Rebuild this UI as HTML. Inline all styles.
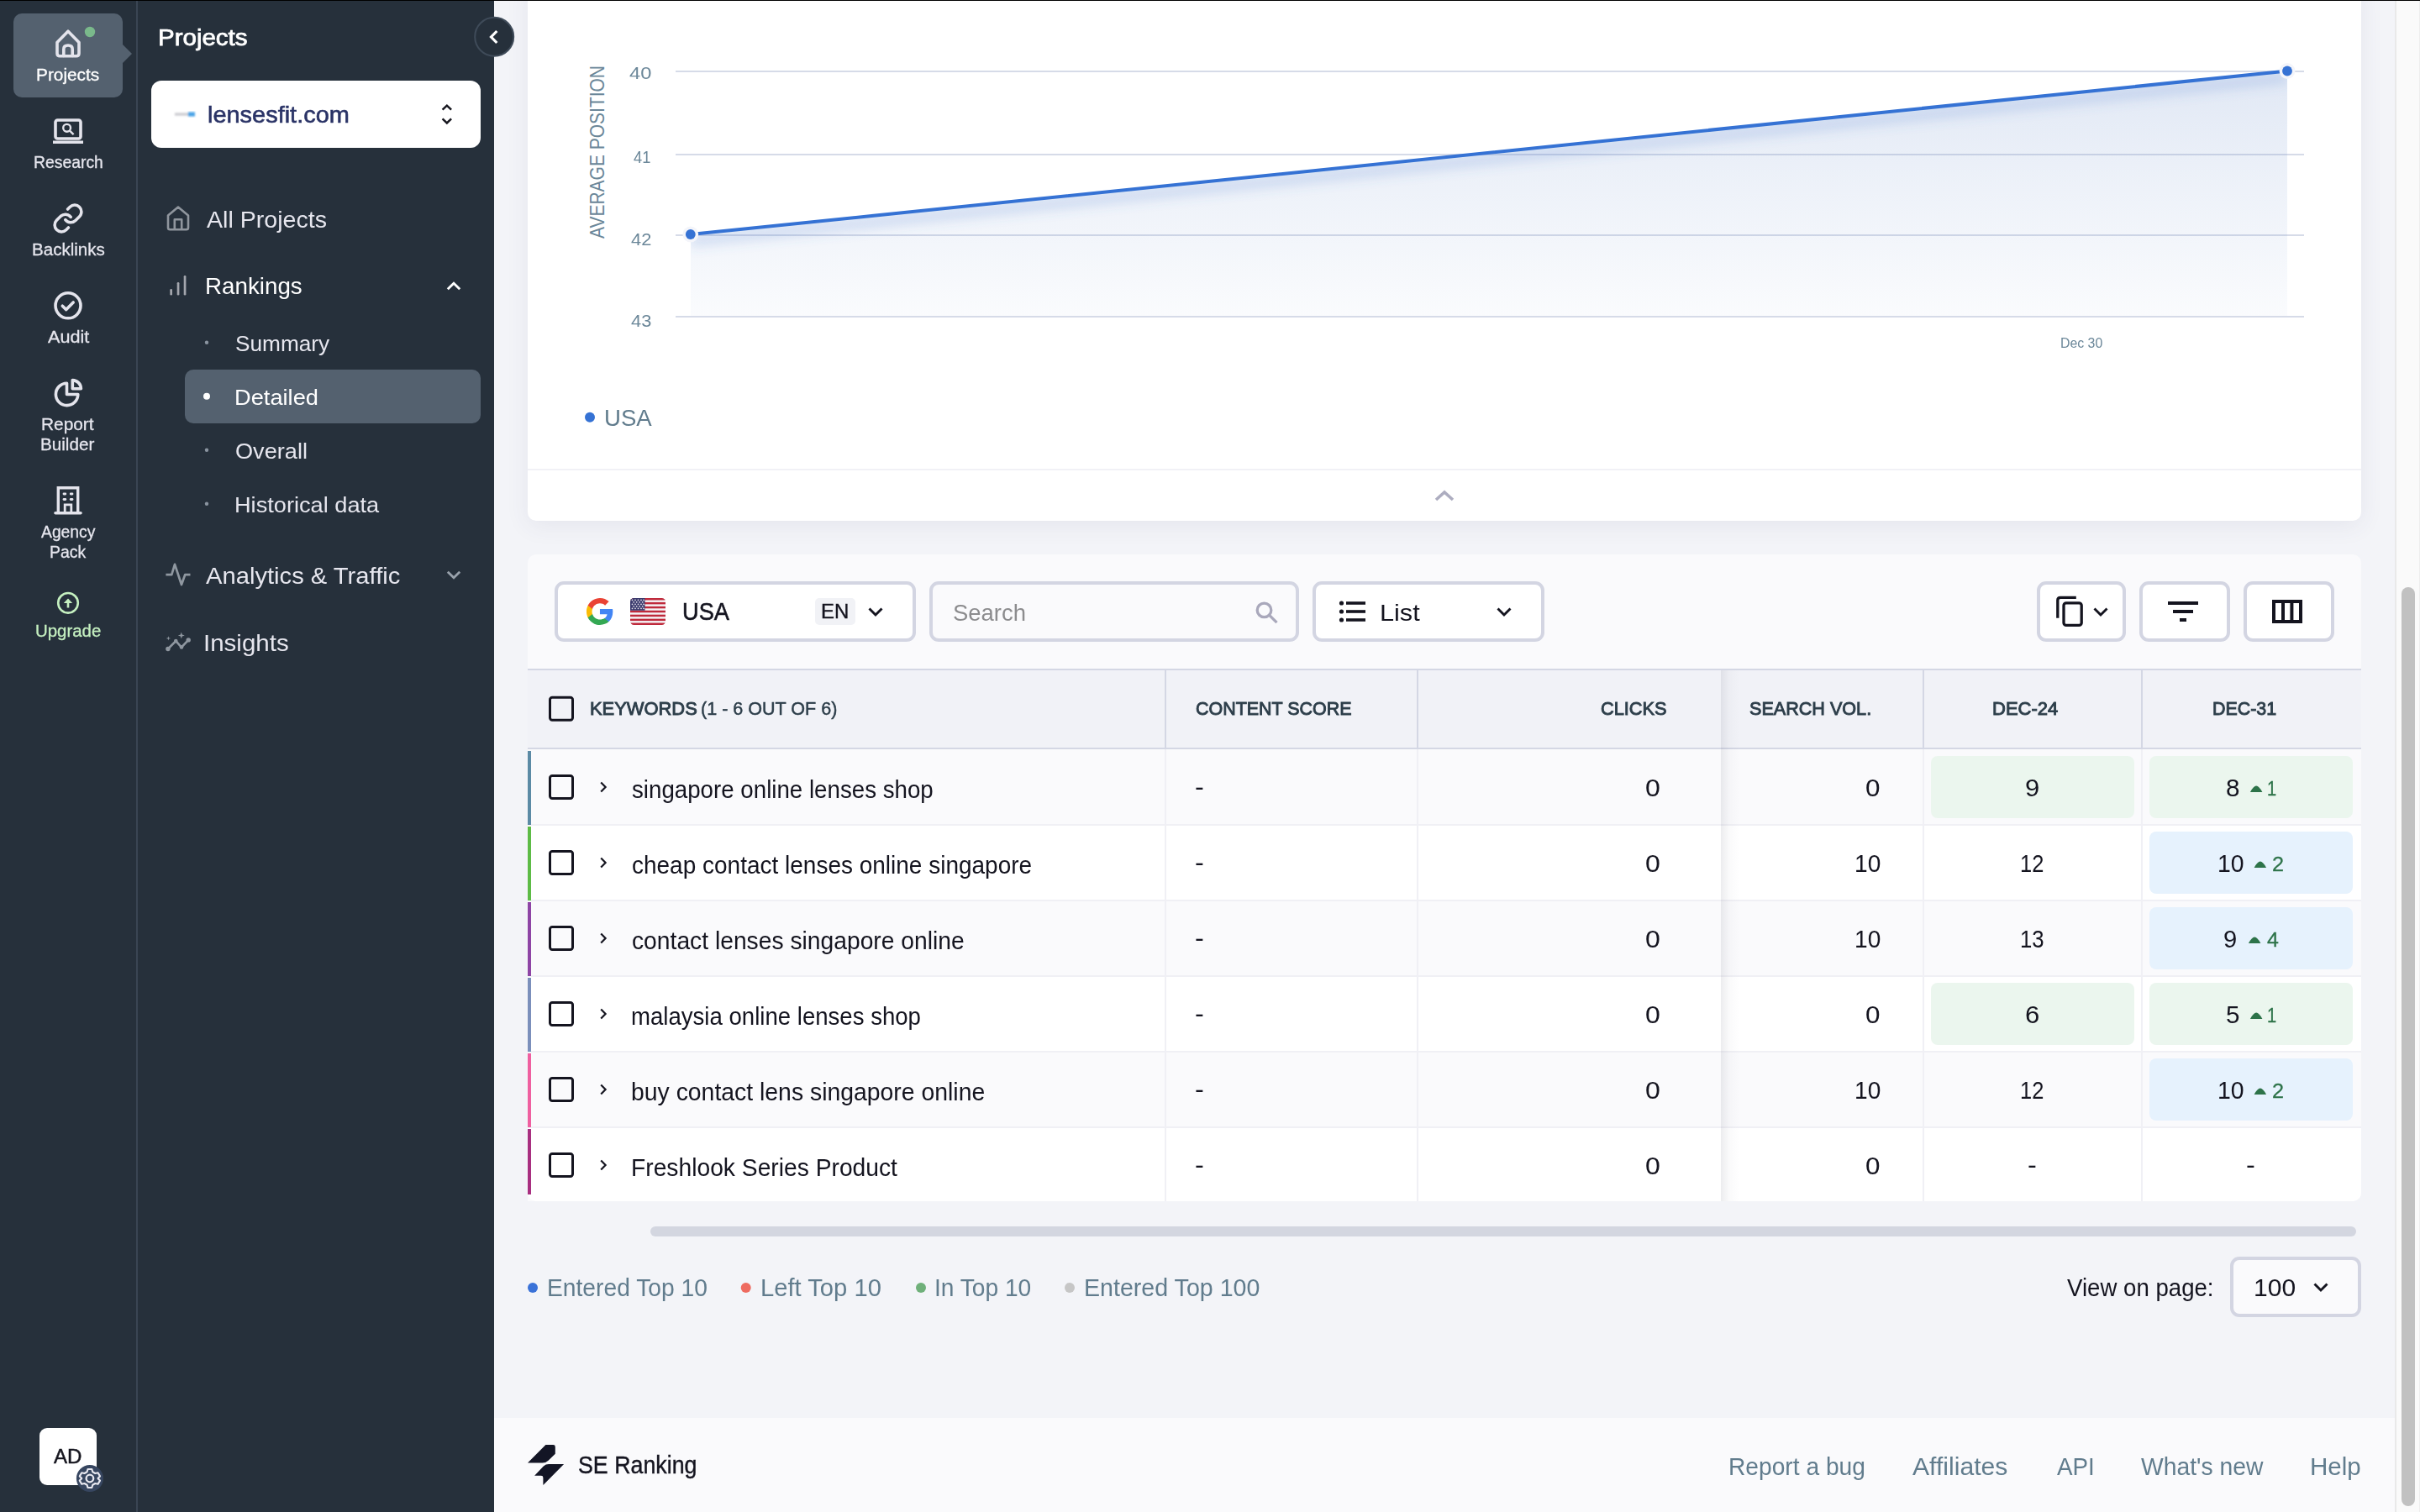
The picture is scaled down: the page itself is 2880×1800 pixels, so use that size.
<!DOCTYPE html>
<html lang="en"><head><meta charset="utf-8"><title>SE Ranking - Rankings</title>
<style>
html,body{margin:0;padding:0}
body{width:2880px;height:1800px;position:relative;overflow:hidden;background:#f3f4f8;font-family:"Liberation Sans",sans-serif}
.a{position:absolute}
.t{position:absolute;white-space:nowrap;line-height:1;transform-origin:0 0}
svg{position:absolute;overflow:visible}
.box{position:absolute;box-sizing:border-box;border:4px solid #d3d5e2;border-radius:11px;background:#fff}
</style></head><body>

<div class="a" style="left:628px;top:-20px;width:2182px;height:640px;background:#fff;border-radius:10px;box-shadow:0 6px 28px rgba(60,70,110,0.078);"></div>
<div class="a" style="left:628px;top:558px;width:2182px;height:2px;background:#f1f1f6;"></div>
<div class="a" style="left:628px;top:660px;width:2182px;height:770px;background:#fafafc;border-radius:10px 10px 10px 0;overflow:hidden;"></div>
<div class="a" style="left:588px;top:1688px;width:2263px;height:112px;background:#fafafc;"></div>
<div class="a" style="left:2850px;top:0px;width:30px;height:1800px;background:#fafafa;border-left:2px solid #e9e9e9;box-sizing:border-box;border-right:1px solid #eee"></div>
<div class="a" style="left:2858px;top:699px;width:16px;height:1094px;background:#c1c1c1;border-radius:8px;"></div>
<div class="a" style="left:804px;top:84px;width:1938px;height:2px;background:#d6dbe8;"></div>
<div class="a" style="left:804px;top:182.8px;width:1938px;height:2px;background:#d6dbe8;"></div>
<div class="a" style="left:804px;top:279.4px;width:1938px;height:2px;background:#d6dbe8;"></div>
<div class="a" style="left:804px;top:375.7px;width:1938px;height:2px;background:#d6dbe8;"></div>
<svg style="left:0;top:0" width="2880" height="640" viewBox="0 0 2880 640">
<defs><linearGradient id="ag" x1="0" y1="0" x2="0" y2="1"><stop offset="0" stop-color="#6e91cd" stop-opacity="0.21"/><stop offset="0.45" stop-color="#6e91cd" stop-opacity="0.125"/><stop offset="1" stop-color="#6e91cd" stop-opacity="0.035"/></linearGradient>
<filter id="bl" x="-5%" y="-50%" width="110%" height="200%"><feGaussianBlur stdDeviation="7"/></filter>
<clipPath id="cp"><polygon points="822,279 2722,84.5 2722,377 822,377"/></clipPath></defs>
<polygon points="822,279 2722,84.5 2722,376 822,376" fill="url(#ag)"/>
<g clip-path="url(#cp)"><line x1="822" y1="287" x2="2722" y2="92.5" stroke="#4a7ad2" stroke-opacity="0.21" stroke-width="13" filter="url(#bl)"/></g>
<line x1="822" y1="279" x2="2722" y2="84.5" stroke="#3572d4" stroke-width="4" stroke-linecap="round"/>
<circle cx="821.8" cy="279" r="9.4" fill="#f4f5fa"/><circle cx="821.8" cy="279" r="5.9" fill="#3572d4"/>
<circle cx="2722" cy="84.5" r="9.4" fill="#f4f5fa"/><circle cx="2722" cy="84.5" r="5.9" fill="#3572d4"/>
<circle cx="702" cy="496.8" r="6" fill="#3572d4"/>
<path d="M1709 595 L1719 586 L1729 595" fill="none" stroke="#adadc0" stroke-width="3.6"/>
</svg>
<div class="box" style="left:660px;top:692px;width:430px;height:72px"></div>
<div class="box" style="left:1106px;top:692px;width:440px;height:72px;background:#fafafc"></div>
<div class="box" style="left:1562px;top:692px;width:276px;height:72px"></div>
<div class="box" style="left:2424px;top:692px;width:106px;height:72px"></div>
<div class="box" style="left:2546px;top:692px;width:108px;height:72px"></div>
<div class="box" style="left:2670px;top:692px;width:108px;height:72px"></div>
<div class="a" style="left:970px;top:712px;width:48px;height:32px;background:#f1f2f6;border-radius:5px;"></div>
<div class="box" style="left:2654px;top:1496px;width:156px;height:72px;background:#fafafc"></div>
<svg style="left:0;top:0" width="2880" height="1800" viewBox="0 0 2880 1800">
<!-- google G -->
<g transform="translate(696.5,710.5) scale(0.7273)">
<path fill="#4285F4" d="M45.12 24.5c0-1.56-.14-3.06-.4-4.5H24v8.51h11.84c-.51 2.75-2.06 5.08-4.39 6.64v5.52h7.11c4.16-3.83 6.56-9.47 6.56-16.17z"/>
<path fill="#34A853" d="M24 46c5.94 0 10.92-1.97 14.56-5.33l-7.11-5.52c-1.97 1.32-4.49 2.1-7.45 2.1-5.73 0-10.58-3.87-12.31-9.07H4.34v5.7C7.96 41.07 15.4 46 24 46z"/>
<path fill="#FBBC05" d="M11.69 28.18C11.25 26.86 11 25.45 11 24s.25-2.86.69-4.18v-5.7H4.34C2.85 17.09 2 20.45 2 24c0 3.55.85 6.91 2.34 9.88l7.35-5.7z"/>
<path fill="#EA4335" d="M24 10.75c3.23 0 6.13 1.11 8.41 3.29l6.31-6.31C34.91 4.18 29.93 2 24 2 15.4 2 7.96 6.93 4.34 14.12l7.35 5.7c1.73-5.2 6.58-9.07 12.31-9.07z"/>
</g>
<!-- US flag -->
<defs><clipPath id="fc"><rect x="750" y="712" width="42" height="32" rx="4.5"/></clipPath></defs>
<g clip-path="url(#fc)">
<rect x="750" y="712" width="42" height="32" fill="#f5f5f7"/>
<g fill="#bf2a3c">
<rect x="750" y="712" width="42" height="2.46"/><rect x="750" y="716.92" width="42" height="2.46"/><rect x="750" y="721.85" width="42" height="2.46"/><rect x="750" y="726.77" width="42" height="2.46"/><rect x="750" y="731.69" width="42" height="2.46"/><rect x="750" y="736.62" width="42" height="2.46"/><rect x="750" y="741.54" width="42" height="2.46"/>
</g>
<rect x="750" y="712" width="17.5" height="14.77" fill="#3c3b6e"/>
<g fill="#fff" fill-opacity="0.85">
<circle cx="752.5" cy="714.3" r="0.9"/><circle cx="756" cy="714.3" r="0.9"/><circle cx="759.5" cy="714.3" r="0.9"/><circle cx="763" cy="714.3" r="0.9"/><circle cx="766" cy="714.3" r="0.9"/>
<circle cx="754.2" cy="716.8" r="0.9"/><circle cx="757.7" cy="716.8" r="0.9"/><circle cx="761.2" cy="716.8" r="0.9"/><circle cx="764.7" cy="716.8" r="0.9"/>
<circle cx="752.5" cy="719.3" r="0.9"/><circle cx="756" cy="719.3" r="0.9"/><circle cx="759.5" cy="719.3" r="0.9"/><circle cx="763" cy="719.3" r="0.9"/><circle cx="766" cy="719.3" r="0.9"/>
<circle cx="754.2" cy="721.8" r="0.9"/><circle cx="757.7" cy="721.8" r="0.9"/><circle cx="761.2" cy="721.8" r="0.9"/><circle cx="764.7" cy="721.8" r="0.9"/>
<circle cx="752.5" cy="724.3" r="0.9"/><circle cx="756" cy="724.3" r="0.9"/><circle cx="759.5" cy="724.3" r="0.9"/><circle cx="763" cy="724.3" r="0.9"/><circle cx="766" cy="724.3" r="0.9"/>
</g>
</g>
<!-- chevrons -->
<g fill="none" stroke="#14141f" stroke-width="2.9">
<path d="M1034.5 724.5 L1042 732 L1049.5 724.5"/>
<path d="M1782.5 724.5 L1790 732 L1797.5 724.5"/>
<path d="M2492.5 724.5 L2500 732 L2507.5 724.5"/>
<path d="M2754.5 1528.5 L2762 1536 L2769.5 1528.5"/>
</g>
<!-- search icon -->
<g fill="none" stroke="#a9a8bb" stroke-width="3.3">
<circle cx="1504.5" cy="726.4" r="8.3"/><path d="M1510.6 732.4 L1519.5 741.2"/>
</g>
<!-- list icon -->
<g fill="#14141f">
<circle cx="1596.5" cy="718" r="2.6"/><circle cx="1596.5" cy="728" r="2.6"/><circle cx="1596.5" cy="738" r="2.6"/>
<rect x="1602" y="716.2" width="23" height="3.6"/><rect x="1602" y="726.2" width="23" height="3.6"/><rect x="1602" y="736.2" width="23" height="3.6"/>
</g>
<!-- copy icon -->
<g fill="none" stroke="#14141f" stroke-width="3.3">
<path d="M2470.8 711.3 L2452 711.3 Q2448.8 711.3 2448.8 714.5 L2448.8 735.7"/>
<rect x="2456" y="717.8" width="21.2" height="26.6" rx="3"/>
</g>
<!-- filter icon -->
<g fill="#14141f">
<rect x="2580" y="716" width="36" height="4"/><rect x="2586" y="726" width="24" height="4"/><rect x="2594" y="736" width="8" height="4"/>
</g>
<!-- columns icon -->
<g fill="none" stroke="#14141f" stroke-width="4">
<rect x="2706" y="716" width="32" height="24"/><path d="M2717 716 V740 M2727.4 716 V740"/>
</g>
<!-- footer logo -->
<g fill="#131525">
<path d="M628 1741.6 L649.4 1720 L658.4 1720 Q660.8 1720 660.8 1722.4 L660.8 1730.7 L652.5 1738.7 Q649.5 1741.6 645.5 1741.6 Z"/>
<path d="M671.1 1743 L653 1743 Q649.6 1743 646.8 1745.4 L636.1 1756.8 L644 1756.8 Q646.4 1756.8 646.4 1759.2 L646.4 1767.9 Z"/>
</g>
</svg>

<div class="a" style="left:628px;top:796px;width:2182px;height:96px;background:#f1f2f7;"></div>
<div class="a" style="left:628px;top:796px;width:2182px;height:2px;background:#d4d7e4;"></div>
<div class="a" style="left:628px;top:890px;width:2182px;height:2px;background:#d4d7e4;"></div>
<div class="a" style="left:628px;top:892px;width:2182px;height:91px;background:#fafafc;"></div>
<div class="a" style="left:628px;top:981px;width:2182px;height:2px;background:#f0f0f5;"></div>
<div class="a" style="left:628px;top:894px;width:4px;height:88px;background:#5b8aa5;"></div>
<div class="a" style="left:628px;top:983px;width:2182px;height:90px;background:#ffffff;"></div>
<div class="a" style="left:628px;top:1071px;width:2182px;height:2px;background:#f0f0f5;"></div>
<div class="a" style="left:628px;top:984px;width:4px;height:88px;background:#5dbb46;"></div>
<div class="a" style="left:628px;top:1073px;width:2182px;height:90px;background:#fafafc;"></div>
<div class="a" style="left:628px;top:1161px;width:2182px;height:2px;background:#f0f0f5;"></div>
<div class="a" style="left:628px;top:1074px;width:4px;height:88px;background:#8e44a5;"></div>
<div class="a" style="left:628px;top:1163px;width:2182px;height:90px;background:#ffffff;"></div>
<div class="a" style="left:628px;top:1251px;width:2182px;height:2px;background:#f0f0f5;"></div>
<div class="a" style="left:628px;top:1164px;width:4px;height:88px;background:#7b8fbb;"></div>
<div class="a" style="left:628px;top:1253px;width:2182px;height:90px;background:#fafafc;"></div>
<div class="a" style="left:628px;top:1341px;width:2182px;height:2px;background:#f0f0f5;"></div>
<div class="a" style="left:628px;top:1254px;width:4px;height:88px;background:#ef5fa0;"></div>
<div class="a" style="left:628px;top:1343px;width:2182px;height:87px;background:#ffffff;border-radius:0 0 10px 10px;"></div>
<div class="a" style="left:628px;top:1344px;width:4px;height:78px;background:#a82f80;"></div>
<div class="a" style="left:1386px;top:798px;width:2px;height:92px;background:#d4d7e4;"></div>
<div class="a" style="left:1386px;top:892px;width:2px;height:538px;background:#f0f0f5;"></div>
<div class="a" style="left:1686px;top:798px;width:2px;height:92px;background:#d4d7e4;"></div>
<div class="a" style="left:1686px;top:892px;width:2px;height:538px;background:#f0f0f5;"></div>
<div class="a" style="left:2288px;top:798px;width:2px;height:92px;background:#d4d7e4;"></div>
<div class="a" style="left:2288px;top:892px;width:2px;height:538px;background:#f0f0f5;"></div>
<div class="a" style="left:2548px;top:798px;width:2px;height:92px;background:#d4d7e4;"></div>
<div class="a" style="left:2548px;top:892px;width:2px;height:538px;background:#f0f0f5;"></div>
<div class="a" style="left:2048px;top:798px;width:22px;height:632px;background:linear-gradient(90deg,rgba(40,45,70,0.085),rgba(40,45,70,0.025) 45%,rgba(40,45,70,0));"></div>
<div class="a" style="left:2298px;top:900px;width:242px;height:74px;background:#ebf6ee;border-radius:8px;"></div>
<div class="a" style="left:2558px;top:900px;width:242px;height:74px;background:#ebf6ee;border-radius:8px;"></div>
<div class="a" style="left:2558px;top:990px;width:242px;height:74px;background:#e6f2fd;border-radius:8px;"></div>
<div class="a" style="left:2558px;top:1080px;width:242px;height:74px;background:#e6f2fd;border-radius:8px;"></div>
<div class="a" style="left:2298px;top:1170px;width:242px;height:74px;background:#ebf6ee;border-radius:8px;"></div>
<div class="a" style="left:2558px;top:1170px;width:242px;height:74px;background:#ebf6ee;border-radius:8px;"></div>
<div class="a" style="left:2558px;top:1260px;width:242px;height:74px;background:#e6f2fd;border-radius:8px;"></div>
<svg style="left:0;top:0" width="2880" height="1800" viewBox="0 0 2880 1800">
<rect x="654.5" y="830.2" width="27" height="27" rx="2.7" fill="none" stroke="#14141f" stroke-width="3"/>
<rect x="654.5" y="923.4" width="27" height="27" rx="2.7" fill="none" stroke="#14141f" stroke-width="3"/>
<path d="M715.2 931.4 L720.6 936.9 L715.2 942.4" fill="none" stroke="#14141f" stroke-width="2.2"/>
<rect x="654.5" y="1013.4000000000001" width="27" height="27" rx="2.7" fill="none" stroke="#14141f" stroke-width="3"/>
<path d="M715.2 1021.4 L720.6 1026.9 L715.2 1032.4" fill="none" stroke="#14141f" stroke-width="2.2"/>
<rect x="654.5" y="1103.4" width="27" height="27" rx="2.7" fill="none" stroke="#14141f" stroke-width="3"/>
<path d="M715.2 1111.4 L720.6 1116.9 L715.2 1122.4" fill="none" stroke="#14141f" stroke-width="2.2"/>
<rect x="654.5" y="1193.4" width="27" height="27" rx="2.7" fill="none" stroke="#14141f" stroke-width="3"/>
<path d="M715.2 1201.4 L720.6 1206.9 L715.2 1212.4" fill="none" stroke="#14141f" stroke-width="2.2"/>
<rect x="654.5" y="1283.4" width="27" height="27" rx="2.7" fill="none" stroke="#14141f" stroke-width="3"/>
<path d="M715.2 1291.4 L720.6 1296.9 L715.2 1302.4" fill="none" stroke="#14141f" stroke-width="2.2"/>
<rect x="654.5" y="1373.4" width="27" height="27" rx="2.7" fill="none" stroke="#14141f" stroke-width="3"/>
<path d="M715.2 1381.4 L720.6 1386.9 L715.2 1392.4" fill="none" stroke="#14141f" stroke-width="2.2"/>
<path d="M2677.9 942.9 L2692.4 942.9 Q2688.4 935.4 2685.15 935.4 Q2681.9 935.4 2677.9 942.9 Z" fill="#2d7349"/>
<path d="M2682.6 1032.9 L2697.1 1032.9 Q2693.1 1025.4 2689.85 1025.4 Q2686.6 1025.4 2682.6 1032.9 Z" fill="#2d7349"/>
<path d="M2675.9 1122.9 L2690.4 1122.9 Q2686.4 1115.4 2683.15 1115.4 Q2679.9 1115.4 2675.9 1122.9 Z" fill="#2d7349"/>
<path d="M2677.9 1212.9 L2692.4 1212.9 Q2688.4 1205.4 2685.15 1205.4 Q2681.9 1205.4 2677.9 1212.9 Z" fill="#2d7349"/>
<path d="M2682.6 1302.9 L2697.1 1302.9 Q2693.1 1295.4 2689.85 1295.4 Q2686.6 1295.4 2682.6 1302.9 Z" fill="#2d7349"/>
<circle cx="634" cy="1533" r="6" fill="#3a72d8"/>
<circle cx="887.7" cy="1533" r="6" fill="#ee6b60"/>
<circle cx="1096" cy="1533" r="6" fill="#6fb07a"/>
<circle cx="1273" cy="1533" r="6" fill="#c6c6c6"/>
</svg>
<div class="a" style="left:774px;top:1460px;width:2030px;height:12px;background:#d3d6e0;border-radius:6px;"></div>
<div class="a" style="left:0px;top:0px;width:588px;height:1800px;background:#26303b;"></div>
<div class="a" style="left:162px;top:0px;width:2px;height:1800px;background:#3a4553;"></div>
<div class="a" style="left:0px;top:0px;width:2880px;height:1px;background:#000;"></div>
<div class="a" style="left:16px;top:16px;width:130px;height:100px;background:#54616f;border-radius:10px;"></div>
<svg style="left:145px;top:52px" width="13" height="24" viewBox="0 0 13 24"><path d="M0 0 L12 12 L0 24 Z" fill="#54616f"/></svg>
<div class="a" style="left:180px;top:96px;width:392px;height:80px;background:#fff;border-radius:12px;"></div>
<div class="a" style="left:220px;top:440px;width:352px;height:64px;background:#54616f;border-radius:10px;"></div>
<div class="a" style="left:47px;top:1700px;width:68px;height:68px;background:#fff;border-radius:9px;"></div>
<svg style="left:0;top:0" width="2880" height="1800" viewBox="0 0 2880 1800">
<!-- rail: green dot -->
<circle cx="107" cy="38" r="6.2" fill="#7ab98b"/>
<g fill="none" stroke="#e4e4ec" stroke-width="3.6" stroke-linejoin="round" stroke-linecap="round">
<!-- home -->
<path d="M68 50.5 L81 37.2 L94 50.5 L94 63.5 Q94 66.8 90.7 66.8 L71.3 66.8 Q68 66.8 68 63.5 Z"/>
<path d="M75.8 66.5 L75.8 58.5 Q75.8 54 81 54 Q86.2 54 86.2 58.5 L86.2 66.5"/>
<!-- research -->
<rect x="66" y="143" width="30" height="22" rx="2.5"/>
<path d="M63 169.3 H99" stroke-linecap="butt"/>
</g>
<g fill="none" stroke="#e4e4ec" stroke-width="2.4"><circle cx="79.6" cy="152.3" r="4.4"/><path d="M83 155.7 L87.6 160.2"/></g>
<!-- backlinks -->
<g transform="translate(61.8,240.8) scale(1.6)" fill="none" stroke="#e4e4ec" stroke-width="2.2" stroke-linecap="round" stroke-linejoin="round">
<path d="M10 13a5 5 0 0 0 7.54.54l3-3a5 5 0 0 0-7.07-7.07l-1.72 1.71"/>
<path d="M14 11a5 5 0 0 0-7.54-.54l-3 3a5 5 0 0 0 7.07 7.07l1.71-1.71"/>
</g>
<!-- audit -->
<g fill="none" stroke="#e4e4ec" stroke-width="3.6" stroke-linecap="round" stroke-linejoin="round">
<circle cx="81" cy="363.8" r="15"/><path d="M74.3 364.2 L78.8 368.6 L87.2 360"/>
</g>
<!-- report builder -->
<g fill="none" stroke="#e4e4ec" stroke-width="3.6" stroke-linejoin="round">
<path d="M79.5 456.2 A13.2 13.2 0 1 0 92.8 469.5 L79.5 469.5 Z"/>
<path d="M86.3 452.6 A10.2 10.2 0 0 1 96.4 462.8 L86.3 462.8 Z"/>
</g>
<!-- agency -->
<g fill="none" stroke="#e4e4ec" stroke-width="3.4">
<path d="M69.3 610 V580.8 H92.7 V610"/><path d="M66 610.8 H96" stroke-width="3.6" stroke-linecap="round"/>
<path d="M77.2 610 V600.8 H84.8 V610" stroke-width="2.8"/>
</g>
<g fill="#e4e4ec"><rect x="74.6" y="586.5" width="4.6" height="2.9" rx="1.4"/><rect x="82.8" y="586.5" width="4.6" height="2.9" rx="1.4"/><rect x="74.6" y="593" width="4.6" height="2.9" rx="1.4"/><rect x="82.8" y="593" width="4.6" height="2.9" rx="1.4"/></g>
<!-- upgrade -->
<g fill="none" stroke="#c5f0c0" stroke-width="2.6">
<circle cx="81" cy="717.8" r="11.8"/><path d="M81 723.5 V716"/>
</g>
<path d="M75.8 718 L81 712.4 L86.2 718 Z" fill="#c5f0c0"/>
<!-- gear -->
<circle cx="106.9" cy="1760" r="16" fill="#374660"/>
<g transform="translate(106.9,1760)" fill="none" stroke="#e8e8f0" stroke-width="2.3" stroke-linejoin="round">
<circle r="4.3"/>
<path d="M-2.6 -11.8 L2.6 -11.8 L3.6 -8.3 L6.9 -6.4 L10.4 -7.3 L13 -2.8 L10.5 -0.2 L10.5 0.2 L13 2.8 L10.4 7.3 L6.9 6.4 L3.6 8.3 L2.6 11.8 L-2.6 11.8 L-3.6 8.3 L-6.9 6.4 L-10.4 7.3 L-13 2.8 L-10.5 0.2 L-10.5 -0.2 L-13 -2.8 L-10.4 -7.3 L-6.9 -6.4 L-3.6 -8.3 Z" transform="scale(0.93)"/>
</g>
<!-- collapse button -->
<circle cx="588.2" cy="43.8" r="23" fill="#26303b" stroke="#3f4b59" stroke-width="2"/>
<path d="M591.3 37 L584.5 44 L591.3 51" fill="none" stroke="#fff" stroke-width="3.2"/>
<!-- selector chevrons -->
<g fill="none" stroke="#16161e" stroke-width="2.5">
<path d="M526.6 130.7 L531.85 125.7 L537.1 130.7"/><path d="M526.6 141.4 L531.85 146.4 L537.1 141.4"/>
</g>
<!-- favicon -->
<defs><filter id="fb"><feGaussianBlur stdDeviation="0.8"/></filter></defs>
<g filter="url(#fb)"><rect x="208" y="134.4" width="17" height="3.2" fill="#b4b4ba" fill-opacity="0.7"/><rect x="224" y="133.4" width="8" height="5.2" fill="#4aa3e6"/></g>
<!-- all projects -->
<g fill="none" stroke="#8f959d" stroke-width="2.6" stroke-linejoin="round">
<path d="M200 256.5 L212 246.5 L224 256.5 L224 271 Q224 273.2 221.8 273.2 L202.2 273.2 Q200 273.2 200 271 Z"/>
<path d="M207.8 273 V261.3 H216.2 V273"/>
</g>
<!-- rankings bars -->
<g fill="#a3a6ad"><rect x="202.3" y="344" width="2.7" height="7.5" rx="1.2"/><rect x="210.7" y="336" width="2.7" height="15.5" rx="1.2"/><rect x="218.7" y="328" width="2.7" height="23.5" rx="1.2"/></g>
<path d="M532.8 344.2 L540 337.2 L547.2 344.2" fill="none" stroke="#fff" stroke-width="2.9"/>
<path d="M532.8 680.8 L540 687.7 L547.2 680.8" fill="none" stroke="#98a1ab" stroke-width="2.8"/>
<!-- sub dots -->
<circle cx="246" cy="407.8" r="2.2" fill="#8a94a0"/><circle cx="246" cy="471.8" r="4" fill="#fff"/><circle cx="246" cy="535.8" r="2.2" fill="#8a94a0"/><circle cx="246" cy="599.8" r="2.2" fill="#8a94a0"/>
<!-- analytics -->
<path d="M197.4 684.2 H204.3 L208 671.8 L216 696 L220.2 684.2 H226.5" fill="none" stroke="#8f97a0" stroke-width="2.7" stroke-linejoin="round"/>
<!-- insights -->
<g fill="none" stroke="#8f97a0" stroke-width="2.6"><path d="M199.9 772.5 L209.3 763.1 L216 770.5 L224.2 761.9"/></g>
<g fill="#8f97a0"><circle cx="199.9" cy="772.5" r="2.7"/><circle cx="209.3" cy="763.1" r="2.3"/><circle cx="216" cy="770.5" r="2.3"/><circle cx="224.2" cy="761.9" r="2.7"/>
<path d="M215.8 752.6 L216.8 755.6 L219.8 756.6 L216.8 757.6 L215.8 760.6 L214.8 757.6 L211.8 756.6 L214.8 755.6 Z"/>
<path d="M200.4 757.2 L201 759.3 L203.1 759.9 L201 760.5 L200.4 762.6 L199.8 760.5 L197.7 759.9 L199.8 759.3 Z"/></g>
</svg>

<span class="t" style="left:43.18px;top:79.38px;font-size:20.5px;color:#ffffff;transform:scaleX(1.0151);-webkit-text-stroke:0.3px #ffffff;">Projects</span>
<span class="t" style="left:39.56px;top:183.38px;font-size:20.5px;color:#e6e6ee;transform:scaleX(0.9442);-webkit-text-stroke:0.3px #e6e6ee;">Research</span>
<span class="t" style="left:37.70px;top:286.97px;font-size:20.5px;color:#e6e6ee;transform:scaleX(1.0030);-webkit-text-stroke:0.3px #e6e6ee;">Backlinks</span>
<span class="t" style="left:56.50px;top:391.07px;font-size:20.5px;color:#e6e6ee;transform:scaleX(1.0532);-webkit-text-stroke:0.3px #e6e6ee;">Audit</span>
<span class="t" style="left:49.28px;top:495.28px;font-size:20.5px;color:#e6e6ee;transform:scaleX(1.0164);-webkit-text-stroke:0.3px #e6e6ee;">Report</span>
<span class="t" style="left:48.49px;top:519.08px;font-size:20.5px;color:#e6e6ee;transform:scaleX(1.0079);-webkit-text-stroke:0.3px #e6e6ee;">Builder</span>
<span class="t" style="left:48.80px;top:622.78px;font-size:20.5px;color:#e6e6ee;transform:scaleX(0.9420);-webkit-text-stroke:0.3px #e6e6ee;">Agency</span>
<span class="t" style="left:58.85px;top:647.18px;font-size:20.5px;color:#e6e6ee;transform:scaleX(0.9467);-webkit-text-stroke:0.3px #e6e6ee;">Pack</span>
<span class="t" style="left:41.91px;top:740.98px;font-size:20.5px;color:#c5f0c0;transform:scaleX(0.9948);-webkit-text-stroke:0.3px #c5f0c0;">Upgrade</span>
<span class="t" style="left:64.20px;top:1722.40px;font-size:24px;color:#16161f;transform:scaleX(1.0030);-webkit-text-stroke:0.5px #16161f;">AD</span>
<span class="t" style="left:187.61px;top:31.65px;font-size:27px;color:#ffffff;transform:scaleX(1.0926);-webkit-text-stroke:0.75px #ffffff;">Projects</span>
<span class="t" style="left:246.78px;top:121.84px;font-size:28.3px;color:#2a3366;transform:scaleX(1.0227);-webkit-text-stroke:0.6px #2a3366;">lensesfit.com</span>
<span class="t" style="left:245.50px;top:246.78px;font-size:28.5px;color:#e6e6ee;transform:scaleX(1.0030);">All Projects</span>
<span class="t" style="left:243.55px;top:326.27px;font-size:28.5px;color:#ffffff;transform:scaleX(0.9741);">Rankings</span>
<span class="t" style="left:280.01px;top:396.18px;font-size:26.5px;color:#e6e6ee;transform:scaleX(0.9893);">Summary</span>
<span class="t" style="left:278.94px;top:460.18px;font-size:26.5px;color:#ffffff;transform:scaleX(1.0277);">Detailed</span>
<span class="t" style="left:279.68px;top:524.18px;font-size:26.5px;color:#e6e6ee;transform:scaleX(1.0247);">Overall</span>
<span class="t" style="left:278.65px;top:588.18px;font-size:26.5px;color:#e6e6ee;transform:scaleX(1.0253);">Historical data</span>
<span class="t" style="left:245.00px;top:671.38px;font-size:28.5px;color:#e6e6ee;transform:scaleX(1.0236);">Analytics &amp; Traffic</span>
<span class="t" style="left:241.89px;top:751.17px;font-size:28.5px;color:#e6e6ee;transform:scaleX(1.0351);">Insights</span>
<span class="t" style="left:748.60px;top:76.15px;font-size:21px;color:#6b8799;transform:scaleX(1.1261);">40</span>
<span class="t" style="left:754.40px;top:175.95px;font-size:21px;color:#6b8799;transform:scaleX(0.8739);">41</span>
<span class="t" style="left:750.60px;top:273.65px;font-size:21px;color:#6b8799;transform:scaleX(1.0391);">42</span>
<span class="t" style="left:750.60px;top:371.35px;font-size:21px;color:#6b8799;transform:scaleX(1.0391);">43</span>
<span class="t" style="left:2452.04px;top:399.68px;font-size:16.5px;color:#6b8799;transform:scaleX(0.9608);">Dec 30</span>
<span class="t" style="left:718.56px;top:482.77px;font-size:28.5px;color:#617c8d;transform:scaleX(0.9679);">USA</span>
<span class="t" style="left:811.60px;top:714.29px;font-size:28.6px;color:#14141f;transform:scaleX(0.9509);-webkit-text-stroke:0.55px #14141f;">USA</span>
<span class="t" style="left:977.24px;top:716.46px;font-size:24.4px;color:#14141f;transform:scaleX(0.9800);-webkit-text-stroke:0.4px #14141f;">EN</span>
<span class="t" style="left:1133.84px;top:714.77px;font-size:28.5px;color:#8c8c8e;transform:scaleX(0.9636);">Search</span>
<span class="t" style="left:1641.65px;top:714.77px;font-size:28.5px;color:#14141f;transform:scaleX(1.0762);">List</span>
<span class="t" style="left:701.73px;top:832.31px;font-size:22.7px;color:#2d3e4a;transform:scaleX(0.9656);-webkit-text-stroke:0.95px #2d3e4a;">KEYWORDS</span>
<span class="t" style="left:833.55px;top:832.31px;font-size:22.7px;color:#2d3e4a;transform:scaleX(0.9497);-webkit-text-stroke:0.5px #2d3e4a;">(1 - 6 OUT OF 6)</span>
<span class="t" style="left:1422.65px;top:832.31px;font-size:22.7px;color:#2d3e4a;transform:scaleX(0.9456);-webkit-text-stroke:0.95px #2d3e4a;">CONTENT SCORE</span>
<span class="t" style="left:1905.04px;top:832.31px;font-size:22.7px;color:#2d3e4a;transform:scaleX(0.9593);-webkit-text-stroke:0.95px #2d3e4a;">CLICKS</span>
<span class="t" style="left:2082.05px;top:832.31px;font-size:22.7px;color:#2d3e4a;transform:scaleX(0.9513);-webkit-text-stroke:0.95px #2d3e4a;">SEARCH VOL.</span>
<span class="t" style="left:2371.03px;top:832.31px;font-size:22.7px;color:#2d3e4a;transform:scaleX(0.9700);-webkit-text-stroke:0.95px #2d3e4a;">DEC-24</span>
<span class="t" style="left:2632.56px;top:832.31px;font-size:22.7px;color:#2d3e4a;transform:scaleX(0.9430);-webkit-text-stroke:0.95px #2d3e4a;">DEC-31</span>
<span class="t" style="left:751.74px;top:925.92px;font-size:28.8px;color:#14141f;transform:scaleX(0.9617);">singapore online lenses shop</span>
<span class="t" style="left:1421.88px;top:923.20px;font-size:28.8px;color:#14141f;transform:scaleX(1.1250);">-</span>
<span class="t" style="left:1957.89px;top:923.92px;font-size:28.8px;color:#14141f;transform:scaleX(1.1143);">0</span>
<span class="t" style="left:2220.41px;top:923.92px;font-size:28.8px;color:#14141f;transform:scaleX(1.0929);">0</span>
<span class="t" style="left:751.73px;top:1015.92px;font-size:28.8px;color:#14141f;transform:scaleX(0.9719);">cheap contact lenses online singapore</span>
<span class="t" style="left:1421.88px;top:1013.20px;font-size:28.8px;color:#14141f;transform:scaleX(1.1250);">-</span>
<span class="t" style="left:1957.89px;top:1013.92px;font-size:28.8px;color:#14141f;transform:scaleX(1.1143);">0</span>
<span class="t" style="left:2206.55px;top:1013.92px;font-size:28.8px;color:#14141f;transform:scaleX(0.9759);">10</span>
<span class="t" style="left:751.72px;top:1105.92px;font-size:28.8px;color:#14141f;transform:scaleX(0.9808);">contact lenses singapore online</span>
<span class="t" style="left:1421.88px;top:1103.20px;font-size:28.8px;color:#14141f;transform:scaleX(1.1250);">-</span>
<span class="t" style="left:1957.89px;top:1103.92px;font-size:28.8px;color:#14141f;transform:scaleX(1.1143);">0</span>
<span class="t" style="left:2206.55px;top:1103.92px;font-size:28.8px;color:#14141f;transform:scaleX(0.9759);">10</span>
<span class="t" style="left:750.78px;top:1195.92px;font-size:28.8px;color:#14141f;transform:scaleX(0.9577);">malaysia online lenses shop</span>
<span class="t" style="left:1421.88px;top:1193.20px;font-size:28.8px;color:#14141f;transform:scaleX(1.1250);">-</span>
<span class="t" style="left:1957.89px;top:1193.92px;font-size:28.8px;color:#14141f;transform:scaleX(1.1143);">0</span>
<span class="t" style="left:2220.41px;top:1193.92px;font-size:28.8px;color:#14141f;transform:scaleX(1.0929);">0</span>
<span class="t" style="left:750.73px;top:1285.92px;font-size:28.8px;color:#14141f;transform:scaleX(0.9854);">buy contact lens singapore online</span>
<span class="t" style="left:1421.88px;top:1283.20px;font-size:28.8px;color:#14141f;transform:scaleX(1.1250);">-</span>
<span class="t" style="left:1957.89px;top:1283.92px;font-size:28.8px;color:#14141f;transform:scaleX(1.1143);">0</span>
<span class="t" style="left:2206.55px;top:1283.92px;font-size:28.8px;color:#14141f;transform:scaleX(0.9759);">10</span>
<span class="t" style="left:750.74px;top:1375.92px;font-size:28.8px;color:#14141f;transform:scaleX(0.9804);">Freshlook Series Product</span>
<span class="t" style="left:1421.88px;top:1373.20px;font-size:28.8px;color:#14141f;transform:scaleX(1.1250);">-</span>
<span class="t" style="left:1957.89px;top:1373.92px;font-size:28.8px;color:#14141f;transform:scaleX(1.1143);">0</span>
<span class="t" style="left:2220.41px;top:1373.92px;font-size:28.8px;color:#14141f;transform:scaleX(1.0929);">0</span>
<span class="t" style="left:650.84px;top:1518.72px;font-size:28.8px;color:#617c8d;transform:scaleX(0.9802);">Entered Top 10</span>
<span class="t" style="left:905.47px;top:1518.72px;font-size:28.8px;color:#617c8d;transform:scaleX(1.0137);">Left Top 10</span>
<span class="t" style="left:1111.67px;top:1518.72px;font-size:28.8px;color:#617c8d;transform:scaleX(0.9772);">In Top 10</span>
<span class="t" style="left:1290.01px;top:1518.72px;font-size:28.8px;color:#617c8d;transform:scaleX(0.9933);">Entered Top 100</span>
<span class="t" style="left:2460.30px;top:1519.22px;font-size:28.8px;color:#14141f;transform:scaleX(0.9589);">View on page:</span>
<span class="t" style="left:2681.52px;top:1519.22px;font-size:28.8px;color:#14141f;transform:scaleX(1.0422);">100</span>
<span class="t" style="left:688.47px;top:1730.32px;font-size:28.8px;color:#14141f;transform:scaleX(0.9300);-webkit-text-stroke:0.4px #14141f;">SE Ranking</span>
<span class="t" style="left:2056.84px;top:1731.62px;font-size:28.8px;color:#617c8d;transform:scaleX(0.9785);">Report a bug</span>
<span class="t" style="left:2276.20px;top:1731.62px;font-size:28.8px;color:#617c8d;transform:scaleX(1.0472);">Affiliates</span>
<span class="t" style="left:2447.60px;top:1731.62px;font-size:28.8px;color:#617c8d;transform:scaleX(0.9636);">API</span>
<span class="t" style="left:2548.00px;top:1731.62px;font-size:28.8px;color:#617c8d;transform:scaleX(0.9838);">What&#x27;s new</span>
<span class="t" style="left:2749.45px;top:1731.62px;font-size:28.8px;color:#617c8d;transform:scaleX(1.0268);">Help</span>
<span class="t" style="left:2410.42px;top:923.92px;font-size:28.8px;color:#14141f;transform:scaleX(1.0786);">9</span>
<span class="t" style="left:2648.57px;top:923.92px;font-size:28.8px;color:#14141f;transform:scaleX(1.0286);">8</span>
<span class="t" style="left:2698.13px;top:926.80px;font-size:24px;color:#2d7349;transform:scaleX(0.8364);-webkit-text-stroke:0.3px #2d7349;">1</span>
<span class="t" style="left:2403.93px;top:1013.92px;font-size:28.8px;color:#14141f;transform:scaleX(0.8828);">12</span>
<span class="t" style="left:2638.83px;top:1013.92px;font-size:28.8px;color:#14141f;transform:scaleX(0.9862);">10</span>
<span class="t" style="left:2703.95px;top:1016.80px;font-size:24px;color:#2d7349;transform:scaleX(1.0500);-webkit-text-stroke:0.3px #2d7349;">2</span>
<span class="t" style="left:2403.91px;top:1103.92px;font-size:28.8px;color:#14141f;transform:scaleX(0.8931);">13</span>
<span class="t" style="left:2646.39px;top:1103.92px;font-size:28.8px;color:#14141f;transform:scaleX(1.0143);">9</span>
<span class="t" style="left:2697.80px;top:1106.80px;font-size:24px;color:#2d7349;transform:scaleX(1.0385);-webkit-text-stroke:0.3px #2d7349;">4</span>
<span class="t" style="left:2410.42px;top:1193.92px;font-size:28.8px;color:#14141f;transform:scaleX(1.0786);">6</span>
<span class="t" style="left:2648.57px;top:1193.92px;font-size:28.8px;color:#14141f;transform:scaleX(1.0286);">5</span>
<span class="t" style="left:2698.13px;top:1196.80px;font-size:24px;color:#2d7349;transform:scaleX(0.8364);-webkit-text-stroke:0.3px #2d7349;">1</span>
<span class="t" style="left:2403.93px;top:1283.92px;font-size:28.8px;color:#14141f;transform:scaleX(0.8828);">12</span>
<span class="t" style="left:2638.83px;top:1283.92px;font-size:28.8px;color:#14141f;transform:scaleX(0.9862);">10</span>
<span class="t" style="left:2703.95px;top:1286.80px;font-size:24px;color:#2d7349;transform:scaleX(1.0500);-webkit-text-stroke:0.3px #2d7349;">2</span>
<span class="t" style="left:2413.38px;top:1373.20px;font-size:28.8px;color:#14141f;transform:scaleX(1.1250);">-</span>
<span class="t" style="left:2673.38px;top:1373.20px;font-size:28.8px;color:#14141f;transform:scaleX(1.1250);">-</span>
<span class="t" style="left:700px;top:284px;font-size:23.2px;color:#6b8799;transform-origin:0 0;transform:rotate(-90deg) scaleX(0.905)">AVERAGE POSITION</span>
</body></html>
